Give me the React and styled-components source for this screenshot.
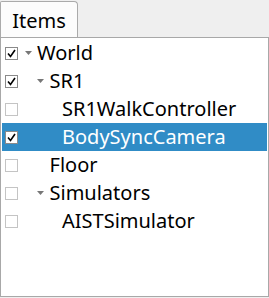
import React from 'react';
import styled, { createGlobalStyle } from 'styled-components';

const GlobalStyle = createGlobalStyle`
  html, body {
    margin: 0;
    padding: 0;
    background: #efefef;
  }
  body {
    font-family: 'Noto Sans', 'Open Sans', sans-serif;
  }
`;

const Frame = styled.div`
  width: 269px;
  height: 297px;
  padding-top: 1px;
  box-sizing: border-box;
  display: flex;
  flex-direction: column;
`;

const TabBar = styled.div`
  display: flex;
  height: 36px;
`;

const Tab = styled.div`
  width: 78px;
  box-sizing: border-box;
  background: #fcfcfc;
  border: 1px solid #aaaaaa;
  border-bottom: none;
  border-radius: 2px 4px 0 0;
  display: flex;
  align-items: center;
  justify-content: center;
  font-size: 20px;
  color: #000;
  padding-top: 2px;
`;

const Panel = styled.div`
  flex: 1;
  background: #fff;
  border: 1px solid #a8a8a8;
  padding: 1px;
  box-sizing: border-box;
`;

const Row = styled.div`
  height: 28px;
  display: flex;
  align-items: center;
  background: ${p => (p.selected ? '#308cc6' : 'transparent')};
  color: ${p => (p.selected ? '#fff' : '#000')};
  font-size: 20px;
`;

const Check = styled.span`
  width: 13px;
  height: 13px;
  box-sizing: border-box;
  margin-left: 3px;
  border: 1px solid ${p => (p.on ? '#8a8a8a' : '#c4c4c4')};
  background: #fff;
  display: flex;
  align-items: center;
  justify-content: center;
  flex-shrink: 0;
`;

const Arrow = styled.span`
  width: 12px;
  display: flex;
  justify-content: center;
  flex-shrink: 0;
`;

const Indent = styled.span`
  width: ${p => p.w}px;
  flex-shrink: 0;
`;

const Label = styled.span`
  white-space: nowrap;
  line-height: 1;
  margin-left: 3px;
`;

const Tick = () => (
  <svg width="9" height="9" viewBox="0 0 9 9">
    <path d="M1 4.5 L3.5 7.5 L8 1" fill="none" stroke="#000" strokeWidth="1.6" />
  </svg>
);

const Tri = () => (
  <svg width="7" height="4" viewBox="0 0 7 4">
    <path d="M0 0 H7 L3.5 4 Z" fill="#777" />
  </svg>
);

const items = [
  { name: 'World', level: 0, open: true, checked: true },
  { name: 'SR1', level: 1, open: true, checked: true },
  { name: 'SR1WalkController', level: 2, checked: false },
  { name: 'BodySyncCamera', level: 2, checked: true, selected: true },
  { name: 'Floor', level: 1, checked: false },
  { name: 'Simulators', level: 1, open: true, checked: false },
  { name: 'AISTSimulator', level: 2, checked: false },
];

export default function App() {
  return (
    <>
      <GlobalStyle />
      <Frame>
        <TabBar>
          <Tab>Items</Tab>
        </TabBar>
        <Panel>
          {items.map(it => (
            <Row key={it.name} selected={it.selected}>
              <Check on={it.checked}>{it.checked && <Tick />}</Check>
              <Indent w={4 + it.level * 12.5} />
              <Arrow>{it.open && <Tri />}</Arrow>
              <Label>{it.name}</Label>
            </Row>
          ))}
        </Panel>
      </Frame>
    </>
  );
}
